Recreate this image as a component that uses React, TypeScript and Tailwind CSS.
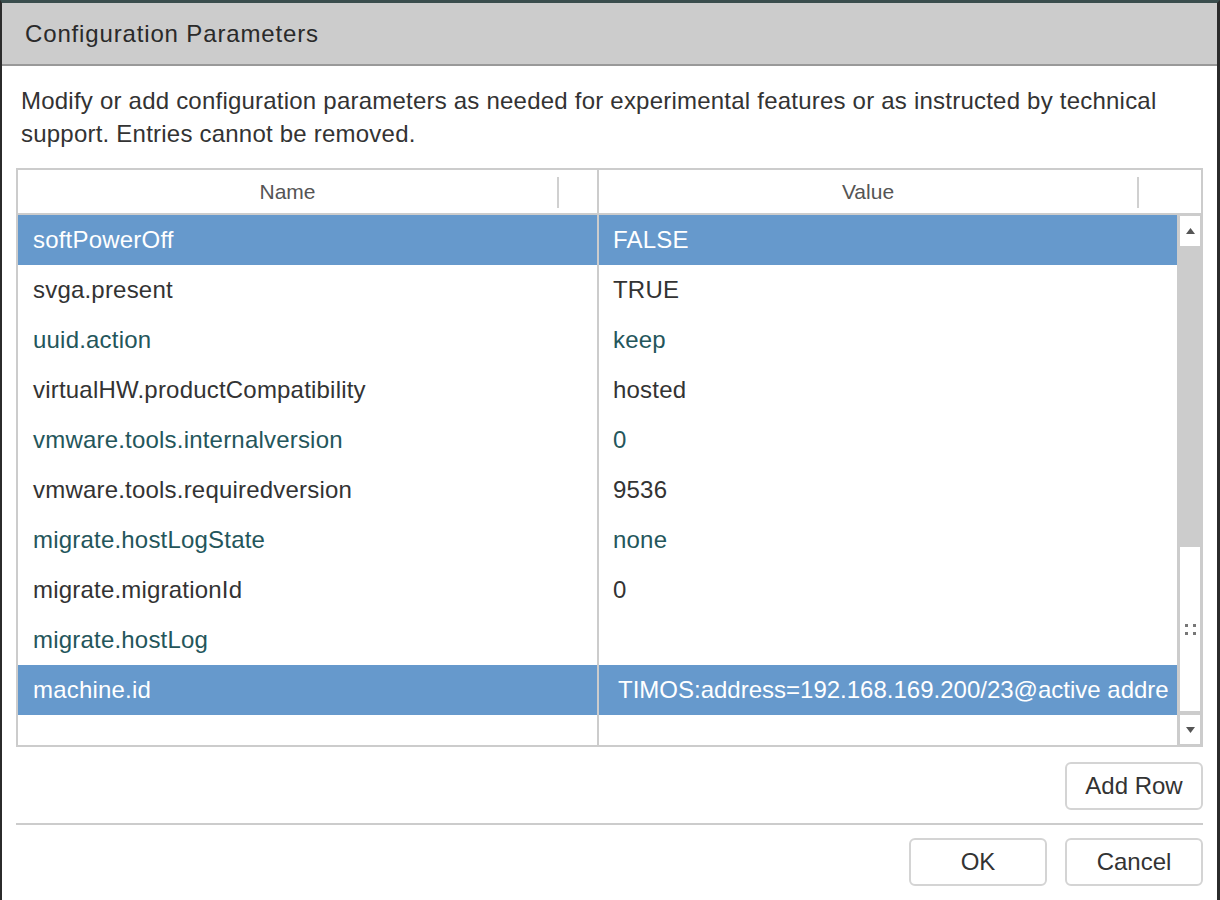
import React from 'react';

interface ParamRow {
  name: string;
  value: string;
  selected?: boolean;
}

const rows: ParamRow[] = [
  { name: 'softPowerOff', value: 'FALSE', selected: true },
  { name: 'svga.present', value: 'TRUE' },
  { name: 'uuid.action', value: 'keep' },
  { name: 'virtualHW.productCompatibility', value: 'hosted' },
  { name: 'vmware.tools.internalversion', value: '0' },
  { name: 'vmware.tools.requiredversion', value: '9536' },
  { name: 'migrate.hostLogState', value: 'none' },
  { name: 'migrate.migrationId', value: '0' },
  { name: 'migrate.hostLog', value: '' },
  { name: 'machine.id', value: 'TIMOS:address=192.168.169.200/23@active addre', selected: true },
];

const font = { fontFamily: '"Liberation Sans", Arial, sans-serif' };

const Arrow: React.FC<{ up?: boolean }> = ({ up }) => (
  <svg width="9" height="6" viewBox="0 0 9 6">
    <polygon points={up ? '0,6 4.5,0 9,6' : '0,0 9,0 4.5,6'} fill="#555" />
  </svg>
);

const DialogButton: React.FC<{ label: string }> = ({ label }) => (
  <button className="w-[138px] h-[48px] border-2 border-[#d4d4d4] rounded-[6px] bg-white text-[24px] text-[#333] flex items-center justify-center">
    {label}
  </button>
);

const App: React.FC = () => {
  return (
    <div
      className="w-[1220px] h-[900px] overflow-hidden bg-white border-t-[3px] border-t-[#3a4d4d] border-l-2 border-l-[#2b2b2b] border-r-[3px] border-r-[#2b2b2b] flex flex-col"
      style={font}
    >
      {/* Title bar */}
      <div className="h-[63px] shrink-0 bg-[#cccccc] border-b-2 border-[#999999] pl-[23px] flex items-center">
        <h1 className="text-[24px] tracking-[0.85px] text-[#2a2a2a]">Configuration Parameters</h1>
      </div>

      <div className="px-[14px] flex flex-col">
        {/* Description */}
        <p className="mt-[18px] px-[5px] text-[24px] leading-[33px] tracking-[0.22px] text-[#333]">
          Modify or add configuration parameters as needed for experimental features or as instructed by technical
          support. Entries cannot be removed.
        </p>

        {/* Table */}
        <div className="mt-[18px] border-2 border-[#cccccc] flex flex-col">
          <div className="h-[45px] flex border-b-2 border-[#cccccc] text-[21px] text-[#555]">
            <div className="w-[581px] flex border-r-2 border-[#cccccc]">
              <div className="w-[539px] flex items-center justify-center">Name</div>
              <div className="w-[2px] h-[31px] mt-[7px] bg-[#d0d0d0]" />
            </div>
            <div className="flex-1 flex">
              <div className="w-[538px] flex items-center justify-center">Value</div>
              <div className="w-[2px] h-[31px] mt-[7px] bg-[#d0d0d0]" />
            </div>
          </div>

          <div className="flex h-[530px]">
            <div className="flex-1 min-w-0 flex flex-col">
              {rows.map((row, i) => {
                const tone = row.selected ? 'bg-[#6699cc] text-white' : i % 2 === 0 ? 'text-[#24565b]' : 'text-[#333]';
                const isMachine = row.name === 'machine.id';
                return (
                  <div key={row.name} className={`h-[50px] flex text-[24px] ${tone}`}>
                    <div className="w-[581px] shrink-0 pl-[15px] flex items-center tracking-[0.2px] border-r-2 border-[#cccccc]">
                      {row.name}
                    </div>
                    <div
                      className={`flex-1 min-w-0 flex items-center overflow-hidden whitespace-nowrap ${
                        isMachine ? 'pl-[19px] tracking-[0px]' : 'pl-[14px] tracking-[0.2px]'
                      }`}
                    >
                      {row.value}
                    </div>
                  </div>
                );
              })}
              <div className="flex-1 flex">
                <div className="w-[581px] border-r-2 border-[#cccccc]" />
              </div>
            </div>

            {/* Scrollbar */}
            <div className="w-[24px] shrink-0 bg-[#cccccc] pl-[3px] pr-[1px] flex flex-col">
              <div className="mt-[1px] h-[30px] bg-white flex items-center justify-center">
                <Arrow up />
              </div>
              <div className="h-[301px]" />
              <div className="h-[164px] bg-white flex items-center justify-center">
                <div className="grid grid-cols-2 gap-x-[5px] gap-y-[5px]">
                  <span className="w-[3px] h-[3px] bg-[#777]" />
                  <span className="w-[3px] h-[3px] bg-[#777]" />
                  <span className="w-[3px] h-[3px] bg-[#777]" />
                  <span className="w-[3px] h-[3px] bg-[#777]" />
                </div>
              </div>
              <div className="h-[4px]" />
              <div className="h-[29px] bg-white flex items-center justify-center">
                <Arrow />
              </div>
            </div>
          </div>
        </div>

        <div className="mt-[15px] flex justify-end">
          <DialogButton label="Add Row" />
        </div>

        <div className="mt-[13px] h-[2px] bg-[#cccccc]" />

        <div className="mt-[13px] flex justify-end gap-[18px]">
          <DialogButton label="OK" />
          <DialogButton label="Cancel" />
        </div>
      </div>
    </div>
  );
};

export default App;
